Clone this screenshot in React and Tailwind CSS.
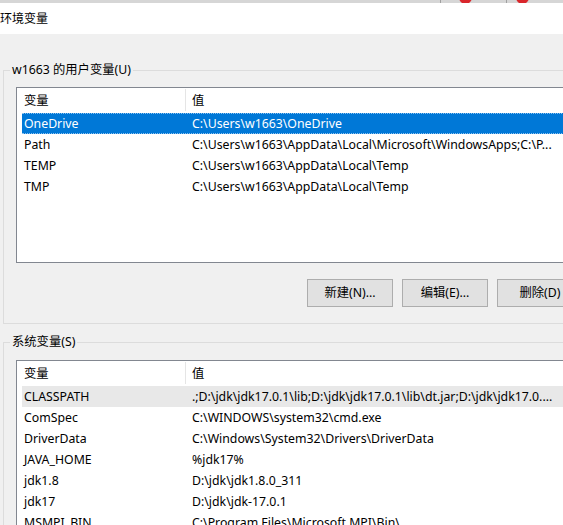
import React from 'react';

const userVars = [
  { name: 'OneDrive', value: 'C:\\Users\\w1663\\OneDrive', selected: true },
  { name: 'Path', value: 'C:\\Users\\w1663\\AppData\\Local\\Microsoft\\WindowsApps;C:\\P...' },
  { name: 'TEMP', value: 'C:\\Users\\w1663\\AppData\\Local\\Temp' },
  { name: 'TMP', value: 'C:\\Users\\w1663\\AppData\\Local\\Temp' },
];

const systemVars = [
  { name: 'CLASSPATH', value: '.;D:\\jdk\\jdk17.0.1\\lib;D:\\jdk\\jdk17.0.1\\lib\\dt.jar;D:\\jdk\\jdk17.0....', hover: true },
  { name: 'ComSpec', value: 'C:\\WINDOWS\\system32\\cmd.exe' },
  { name: 'DriverData', value: 'C:\\Windows\\System32\\Drivers\\DriverData' },
  { name: 'JAVA_HOME', value: '%jdk17%' },
  { name: 'jdk1.8', value: 'D:\\jdk\\jdk1.8.0_311' },
  { name: 'jdk17', value: 'D:\\jdk\\jdk-17.0.1' },
  { name: 'MSMPI_BIN', value: 'C:\\Program Files\\Microsoft MPI\\Bin\\' },
];

const VarList = ({ rows, height }) => (
  <div className={`ml-[12px] w-[567px] ${height} border border-[#828790] bg-white overflow-hidden`}>
    {/* header */}
    <div className="flex h-[25px] items-center">
      <div className="w-[168px] pl-[7px]">变量</div>
      <div className="h-[22px] w-px self-start mt-[1px] bg-[#e5e5e5]" />
      <div className="pl-[6px]">值</div>
    </div>
    {rows.map((r) => (
      <div
        key={r.name}
        className={`ml-[5px] flex h-[21px] items-center whitespace-nowrap ${
          r.selected
            ? 'bg-[#0078d7] text-white border-y border-dotted border-[#8cc2f0]'
            : r.hover
            ? 'bg-[#e8e8e8]'
            : ''
        }`}
      >
        <div className="w-[170px] pl-[2px]">{r.name}</div>
        <div>{r.value}</div>
      </div>
    ))}
  </div>
);

const Btn = ({ children }) => (
  <button className="h-[28px] w-[86px] border border-[#adadad] bg-[#e1e1e1] text-black">
    {children}
  </button>
);

export default function App() {
  return (
    <div
      className="relative h-[525px] w-[563px] overflow-hidden bg-[#f0f0f0] text-[12.3px] leading-[18px] text-black"
      style={{ fontFamily: '"Noto Sans", "Noto Sans CJK SC", sans-serif' }}
    >
      {/* sliver of the window behind */}
      <div className="relative h-[3px] bg-[#d6d6d6] overflow-hidden">
        <div className="absolute left-[440px] top-0 h-[3px] w-px bg-[#a0a0a0]" />
        <div className="absolute left-[506px] top-0 h-[3px] w-px bg-[#a0a0a0]" />
        <div className="absolute left-[459px] -top-[9px] h-[13px] w-[13px] rounded-full bg-[#d9262b]" />
        <div className="absolute left-[516px] -top-[9px] h-[13px] w-[13px] rounded-full bg-[#d9262b]" />
      </div>

      {/* title bar */}
      <div className="flex h-[31px] items-center bg-white">
        <span className="text-[12px]">环境变量</span>
      </div>

      {/* user variables */}
      <fieldset className="ml-[3px] mt-[27px] w-[600px] border border-[#dcdcdc] pb-[16px]">
        <legend className="ml-[6px] px-[2px] leading-[18px]">w1663 的用户变量(U)</legend>
        <div className="mt-[8px]">
          <VarList rows={userVars} height="h-[176px]" />
        </div>
        <div className="mt-[16px] flex gap-[9px] pl-[303px]">
          <Btn>新建(N)...</Btn>
          <Btn>编辑(E)...</Btn>
          <Btn>删除(D)</Btn>
        </div>
      </fieldset>

      {/* system variables */}
      <fieldset className="ml-[3px] mt-[9px] w-[600px] border border-[#dcdcdc] pb-[16px]">
        <legend className="ml-[6px] px-[2px] leading-[18px]">系统变量(S)</legend>
        <div className="mt-[9px]">
          <VarList rows={systemVars} height="h-[200px]" />
        </div>
      </fieldset>
    </div>
  );
}
